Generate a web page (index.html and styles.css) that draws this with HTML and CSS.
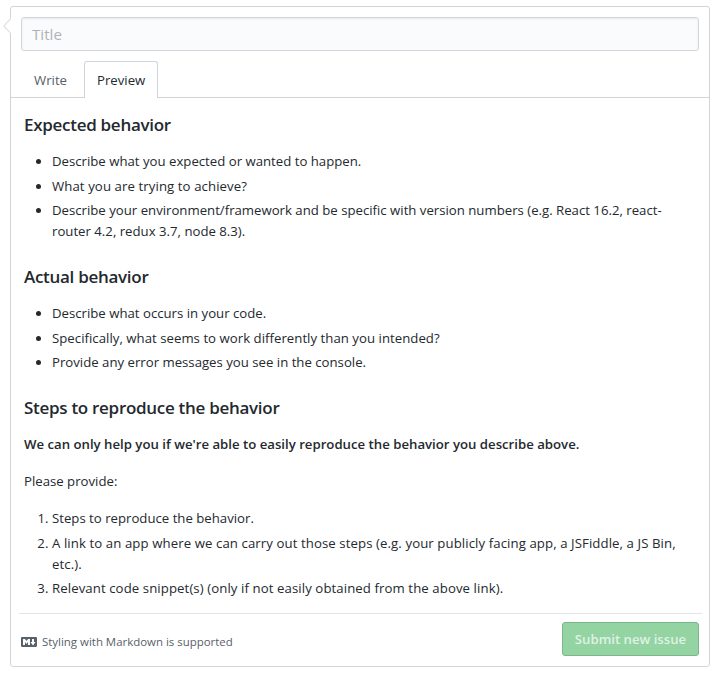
FILE: index.html
```html
<!DOCTYPE html>
<html lang="en">
<head>
<meta charset="utf-8">
<title>New issue</title>
<link rel="stylesheet" href="styles.css">
</head>
<body>
<form class="issue">
  <svg class="caret" width="8" height="16" viewBox="0 0 8 16"><path d="M8 .5.8 8 8 15.5" fill="#fff" stroke="#dfe2e5" stroke-width="1.2"/></svg>
  <div class="title-field">Title</div>
  <nav class="tabs">
    <span class="tab">Write</span>
    <span class="tab selected">Preview</span>
  </nav>
  <div class="markdown">
    <h3>Expected behavior</h3>
    <ul>
      <li>Describe what you expected or wanted to happen.</li>
      <li class="loose">What you are trying to achieve?</li>
      <li>Describe your environment/framework and be specific with version numbers (e.g. React 16.2, react-<br>router 4.2, redux 3.7, node 8.3).</li>
    </ul>
    <h3>Actual behavior</h3>
    <ul>
      <li>Describe what occurs in your code.</li>
      <li class="slack">Specifically, what seems to work differently than you intended?</li>
      <li>Provide any error messages you see in the console.</li>
    </ul>
    <h3>Steps to reproduce the behavior</h3>
    <p><strong>We can only help you if we're able to easily reproduce the behavior you describe above.</strong></p>
    <p>Please provide:</p>
    <ol>
      <li>Steps to reproduce the behavior.</li>
      <li class="loose">A link to an app where we can carry out those steps (e.g. your publicly facing app, a JSFiddle, a JS Bin,<br>etc.).</li>
      <li class="loose">Relevant code snippet(s) (only if not easily obtained from the above link).</li>
    </ol>
  </div>
  <footer class="actions">
    <span class="hint">
      <svg width="16" height="16" viewBox="0 0 16 16" fill="#586069"><path fill-rule="evenodd" d="M14.85 3H1.15C.52 3 0 3.52 0 4.15v7.69C0 12.48.52 13 1.15 13h13.69c.64 0 1.15-.52 1.15-1.15v-7.7C16 3.52 15.48 3 14.85 3zM9 11H7V8L5.5 9.92 4 8v3H2V5h2l1.5 2L7 5h2v6zm2.99.5L9.5 8H11V5h2v3h1.5l-2.51 3.5z"/></svg>
      <span>Styling with Markdown is supported</span>
    </span>
    <button class="submit" type="button" disabled>Submit new issue</button>
  </footer>
</form>
</body>
</html>
```
FILE: styles.css
```css
* { box-sizing: border-box; }

body {
  margin: 0;
  padding: 6px 7px 0 10px;
  background: #fff;
  color: #24292e;
  font: 13.2px/21px "Open Sans", "Noto Sans", sans-serif;
}

.issue {
  position: relative;
  display: flex;
  flex-direction: column;
  height: 661px;
  border: 1px solid #d1d5da;
  border-radius: 3px;
}

.caret {
  position: absolute;
  left: -8px;
  top: 11px;
}

.title-field {
  height: 34px;
  margin: 10px 10px 0;
  padding: 0 10px;
  border: 1px solid #d1d5da;
  border-radius: 3px;
  background: #fafbfc;
  box-shadow: inset 0 1px 2px rgba(27, 31, 35, .075);
  color: #b0b3b6;
  font-size: 15.2px;
  line-height: 33px;
}

.tabs {
  display: flex;
  height: 37px;
  margin-top: 10px;
  padding-left: 10px;
  border-bottom: 1px solid #d1d5da;
}

.tab {
  height: 37px;
  padding: 8px 12px;
  border: 1px solid transparent;
  border-bottom: 0;
  border-radius: 3px 3px 0 0;
  color: #586069;
  white-space: nowrap;
  width: 63px;
}

.tab.selected {
  width: 74px;
  border-color: #d1d5da;
  background: #fff;
  color: #24292e;
}

.markdown {
  height: 515px;
  padding: 16px 0 0 13px;
  white-space: nowrap;
}

h3 {
  margin: 24px 0 16px;
  font-size: 17px;
  font-weight: 600;
  letter-spacing: -.29px;
  line-height: 21px;
}

h3:first-child { margin-top: 0; }

ul, ol {
  margin: 0;
  padding-left: 28px;
}

li + li { margin-top: 3.5px; }

.loose { letter-spacing: .09px; }

.slack { letter-spacing: .03px; }

p { margin: 0 0 16px; }

strong { font-weight: 600; }

.actions {
  display: flex;
  align-items: flex-start;
  justify-content: space-between;
  margin: 0 7px 0 8px;
  padding: 8px 3px 0 2px;
  border-top: 1px solid #e1e4e8;
}

.hint {
  display: flex;
  align-items: center;
  gap: 5px;
  margin-top: 9px;
  color: #586069;
  font-size: 11.45px;
}

.submit {
  width: 137px;
  height: 34px;
  padding: 0;
  border: 1px solid #7fb58c;
  border-radius: 3px;
  background: #94d3a2;
  color: #dff2e3;
  font: 600 13.2px/20px "Open Sans", "Noto Sans", sans-serif;
}
```
